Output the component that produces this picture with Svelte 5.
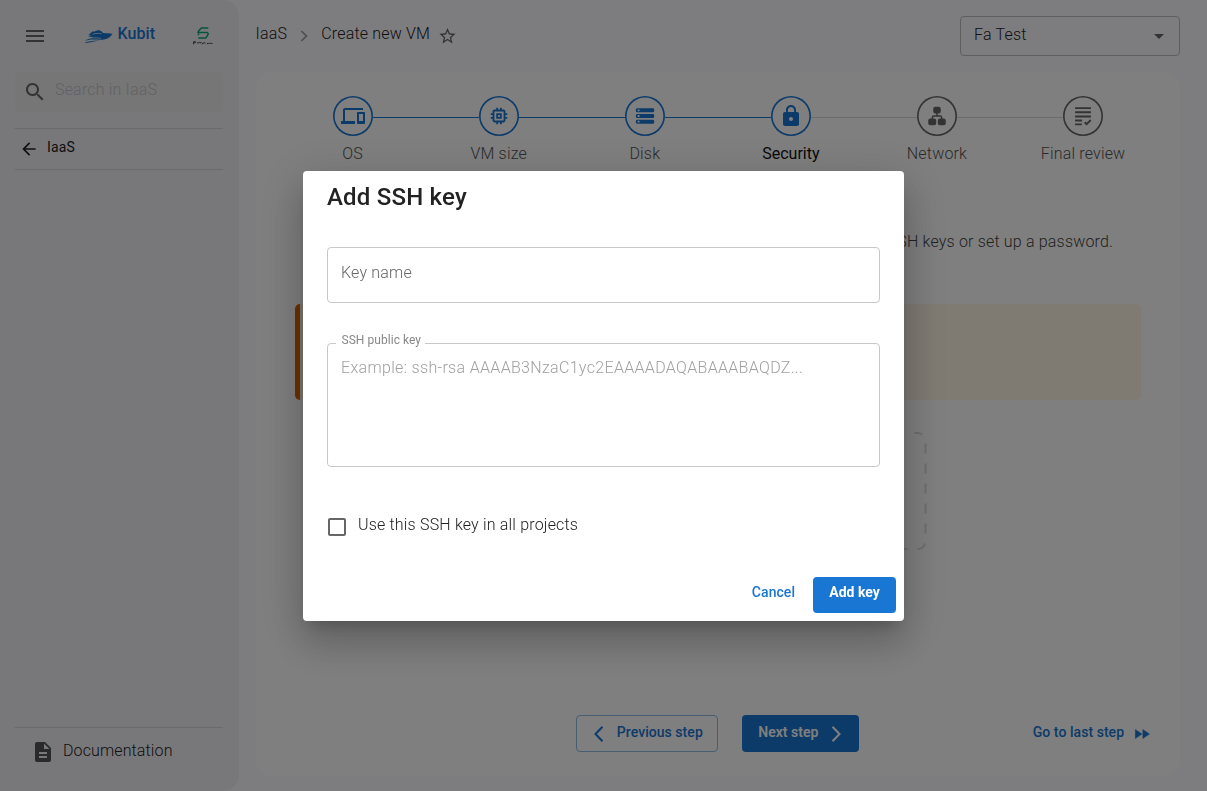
<script lang="ts">
  const steps = [
    { label: 'OS', icon: 'os', state: 'done' },
    { label: 'VM size', icon: 'cpu', state: 'done' },
    { label: 'Disk', icon: 'disk', state: 'done' },
    { label: 'Security', icon: 'lock', state: 'active' },
    { label: 'Network', icon: 'network', state: 'todo' },
    { label: 'Final review', icon: 'review', state: 'todo' }
  ];
</script>

<div class="page">
  <aside class="sidebar">
    <div class="brand-row">
      <svg class="burger" width="24" height="24" viewBox="0 0 24 24"><path d="M3 18h18v-2H3v2zm0-5h18v-2H3v2zm0-7v2h18V6H3z" /></svg>
      <div class="brand">
        <svg width="30" height="16" viewBox="0 0 30 16">
          <path d="M3.500 7.200C6 6.500 6.500 4.700 9 3.300l1.500.5C12.500 2.200 15 1.800 17 2.900l2.200 2.200c3 .5 6.300.2 9.300.7-1.600 2.900-4.300 5.200-8.500 5.700C14 12.300 9 10.700 4.500 12.100L.8 12.800c3-2.200 6-2.900 9.200-3.300-2.500-.6-4-.8-6-.6l3-1.900z" />
          <path d="M8.500 6.200c3-.9 6-1 9-.5M3 11c4-1.500 8.500-1.500 14-.6" class="cut" />
          <path d="M1 14.200c4-.3 8-2.100 15-1.700-5 .2-9 2.200-14.500 2.400z" />
        </svg>
        <span>Kubit</span>
      </div>
      <svg class="partner" width="22" height="20" viewBox="0 0 22 20">
        <path d="M16.300 1.900H9.300L6.800 4.700 5.900 6.600h9.500l1 1.300-2.500 4H6.300M6 9l1-1.200" fill="none" stroke="#0aa77c" stroke-width="1.500" stroke-linejoin="round" />
        <path d="M1.500 18.300v-2.500l1.700-.4.500 1-2 .8M5 17.200l1.200-.7.400.6 1.300-1.100.5 1 1.300-.5M10 18.300l1-1.500.7.500 1.300-.7.400.8M15 18.300l.7-1.200 1 .4 1.300-.4.800.4 1.800-.1" fill="none" stroke="#222" stroke-width=".75" />
      </svg>
    </div>
    <div class="search">
      <svg width="24" height="24" viewBox="0 0 24 24"><path d="M15.500 14h-.79l-.28-.27C15.410 12.590 16 11.110 16 9.500 16 5.910 13.090 3 9.500 3S3 5.910 3 9.500 5.910 16 9.500 16c1.610 0 3.090-.59 4.230-1.570l.27.28v.79l5 4.990L20.490 19l-4.990-5zm-6 0C7.010 14 5 11.990 5 9.500S7.010 5 9.500 5 14 7.010 14 9.500 11.990 14 9.500 14z" /></svg>
      <span>Search in IaaS</span>
    </div>
    <div class="back">
      <svg width="20" height="20" viewBox="0 0 24 24"><path d="M20 11H7.830l5.590-5.590L12 4l-8 8 8 8 1.410-1.410L7.830 13H20v-2z" /></svg>
      <span>IaaS</span>
    </div>
    <div class="docs">
      <svg width="24" height="24" viewBox="0 0 24 24"><path d="M14 2H6c-1.100 0-1.990.9-1.990 2L4 20c0 1.100.89 2 1.990 2H18c1.100 0 2-.9 2-2V8l-6-6zm2 16H8v-2h8v2zm0-4H8v-2h8v2zm-3-5V3.500L18.500 9H13z" /></svg>
      <span>Documentation</span>
    </div>
  </aside>

  <main>
    <header>
      <nav>
        <span>IaaS</span>
        <svg class="sep" width="20" height="20" viewBox="0 0 20 20"><path d="M7.300 5l5.200 5-5.200 5" fill="none" stroke="#9a9a9a" stroke-width="1.700" /></svg>
        <span>Create new VM</span>
        <svg class="star" width="17" height="17" viewBox="1.500 2 21 21"><path d="M22 9.240l-7.190-.62L12 2 9.190 8.630 2 9.240l5.460 4.730L5.820 21 12 17.270 18.180 21l-1.630-7.030L22 9.240zM12 15.400l-3.760 2.270 1-4.280-3.320-2.880 4.380-.38L12 6.100l1.710 4.040 4.380.38-3.320 2.880 1 4.280L12 15.400z" /></svg>
      </nav>
      <div class="select">
        <span>Fa Test</span>
        <svg width="24" height="24" viewBox="0 0 24 24"><path d="M7 10l5 5 5-5z" /></svg>
      </div>
    </header>

    <section class="card">
      <div class="stepper">
        {#each steps as s}
          <div class="step {s.state}">
            <div class="track">
              <i></i>
              <div class="circle">
                {#if s.icon === 'os'}
                  <svg width="24" height="24" viewBox="0 0 24 24"><path d="M4 6h18V4H4c-1.100 0-2 .9-2 2v11H0v3h14v-3H4V6zm19 2h-6c-.55 0-1 .45-1 1v10c0 .55.45 1 1 1h6c.55 0 1-.45 1-1V9c0-.55-.45-1-1-1zm-1 9h-4v-7h4v7z" /></svg>
                {:else if s.icon === 'cpu'}
                  <svg width="24" height="24" viewBox="0 0 24 24"><path d="M15 9H9v6h6V9zm-2 4h-2v-2h2v2zm8-2V9h-2V7c0-1.100-.9-2-2-2h-2V3h-2v2h-2V3H9v2H7c-1.100 0-2 .9-2 2v2H3v2h2v2H3v2h2v2c0 1.100.9 2 2 2h2v2h2v-2h2v2h2v-2h2c1.100 0 2-.9 2-2v-2h2v-2h-2v-2h2zm-4 6H7V7h10v10z" /></svg>
                {:else if s.icon === 'disk'}
                  <svg width="24" height="24" viewBox="0 0 24 24"><path fill-rule="evenodd" d="M3.500 3.500h17A1.500 1.500 0 0 1 22 5v1.500A1.500 1.500 0 0 1 20.500 8h-17A1.500 1.500 0 0 1 2 6.500V5A1.500 1.500 0 0 1 3.500 3.500zM4 4.800v2h2v-2zM3.500 9.800h17a1.500 1.500 0 0 1 1.500 1.500v1.400a1.500 1.500 0 0 1-1.500 1.500h-17A1.500 1.500 0 0 1 2 12.700v-1.400A1.500 1.500 0 0 1 3.500 9.800zM4 11v2h2v-2zM3.500 16h17a1.500 1.500 0 0 1 1.500 1.500V19a1.500 1.500 0 0 1-1.500 1.500h-17A1.500 1.500 0 0 1 2 19v-1.500A1.500 1.500 0 0 1 3.500 16zM4 17.200v2h2v-2z" /></svg>
                {:else if s.icon === 'lock'}
                  <svg width="24" height="24" viewBox="0 0 24 24"><path d="M18 8h-1V6c0-2.760-2.240-5-5-5S7 3.240 7 6v2H6c-1.100 0-2 .9-2 2v10c0 1.100.9 2 2 2h12c1.100 0 2-.9 2-2V10c0-1.100-.9-2-2-2zm-6 9c-1.100 0-2-.9-2-2s.9-2 2-2 2 .9 2 2-.9 2-2 2zm3.100-9H8.900V6c0-1.710 1.390-3.100 3.100-3.100 1.710 0 3.100 1.390 3.100 3.100v2z" /></svg>
                {:else if s.icon === 'network'}
                  <svg width="24" height="24" viewBox="0 0 24 24"><rect x="7.500" y="1" width="9" height="8" rx="2.400" /><rect x="1.500" y="15" width="9.500" height="8" rx="2.400" /><rect x="13" y="15" width="9.500" height="8" rx="2.400" /><path d="M12 8v4M6.500 16v-2.500q0-1.500 1.500-1.500h8q1.500 0 1.500 1.500V16" fill="none" stroke="currentColor" stroke-width="1.800" /></svg>
                {:else}
                  <svg width="24" height="24" viewBox="0 0 24 24"><path d="M2.500 2.500h19M2.500 7.500h19M2.500 12.500h19M2.500 17.300h8.500M2.500 22h8M14 19.500l2.300 2.300 5-5" fill="none" stroke="currentColor" stroke-width="2.300" /></svg>
                {/if}
              </div>
              <i></i>
            </div>
            <div class="label">{s.label}</div>
          </div>
        {/each}
      </div>

      <p class="intro">You can select one of your SSH keys or set up a password.</p>
      <div class="alert"></div>
      <svg class="dropzone" width="420" height="120" viewBox="0 0 420 120">
        <path d="M406.500 2h3a8 8 0 0 1 8 8v100a8 8 0 0 1-8 8H10a8 8 0 0 1-8-8V10a8 8 0 0 1 8-8h300" />
      </svg>

      <div class="actions">
        <button class="prev">
          <svg width="24" height="24" viewBox="0 0 24 24"><path d="M15.500 4.800L8.500 12l7 7.200" /></svg>
          <span>Previous step</span>
        </button>
        <button class="next">
          <span>Next step</span>
          <svg width="24" height="24" viewBox="0 0 24 24"><path d="M8.500 4.800l7 7.200-7 7.200" /></svg>
        </button>
        <button class="last">
          <span>Go to last step</span>
          <svg width="20" height="20" viewBox="0 0 24 24"><path d="M4 17.500l8-5.500-8-5.500v11zm9-11v11l8-5.500-8-5.500z" stroke="currentColor" stroke-width=".5" /></svg>
        </button>
      </div>
    </section>
  </main>
</div>

<div class="backdrop">
  <div class="dialog" role="dialog">
    <h2>Add SSH key</h2>
    <div class="field name"><span>Key name</span></div>
    <fieldset class="field key">
      <legend>SSH public key</legend>
      <span>Example: ssh-rsa AAAAB3NzaC1yc2EAAAADAQABAAABAQDZ...</span>
    </fieldset>
    <div class="check">
      <svg width="24" height="24" viewBox="0 0 24 24"><path d="M19 5v14H5V5h14m0-2H5c-1.100 0-2 .9-2 2v14c0 1.100.9 2 2 2h14c1.100 0 2-.9 2-2V5c0-1.100-.9-2-2-2z" /></svg>
      <span>Use this SSH key in all projects</span>
    </div>
    <div class="buttons">
      <button class="cancel"><span>Cancel</span></button>
      <button class="add"><span>Add key</span></button>
    </div>
  </div>
</div>

<style>
  :global(body) { margin: 0; overflow: hidden; background: #fbfbff; }
  * { box-sizing: border-box; }
  svg { display: block; flex: none; fill: currentColor; }
  .page, .backdrop { font: 300 16px/24px Roboto, sans-serif; letter-spacing: 0.18px; color: #222; }
  .page { display: flex; width: 1206.6px; height: 791px; background: #fbfbfe; }
  button { font: 500 14px/24px Roboto, sans-serif; letter-spacing: 0.05px; display: flex; align-items: center; border: 0; background: none; color: #1976d2; padding: 0; }
  button span { padding-bottom: 4px; white-space: nowrap; }

  .sidebar { width: 239.4px; flex: none; background: #f1f1f4; border-radius: 0 16px 16px 0; padding: 0 16px 0 15px; display: flex; flex-direction: column; }
  .brand-row { height: 72px; display: flex; align-items: center; padding-left: 8px; }
  .burger { color: #666; }
  .brand { display: flex; align-items: center; gap: 4px; margin-left: 36.5px; color: #1976d2; font-weight: 500; }
  .brand span { padding-bottom: 5px; letter-spacing: 0.1px; }
  .cut { fill: none; stroke: #f1f1f4; stroke-width: 0.7; }
  .partner { margin-left: 36.5px; }
  .search { height: 40px; background: #ececed; border-radius: 5px; display: flex; align-items: center; padding-left: 8px; gap: 8px; color: #666; }
  .search span { color: #c4c4c6; padding-bottom: 5px; }
  .back { height: 42px; margin-top: 16px; border: 1px solid #d4d4d7; border-width: 1px 0; display: flex; align-items: center; gap: 8px; padding-left: 4px; font-weight: 400; font-size: 14px; }
  .back span { padding-bottom: 4px; }
  .docs { margin-top: auto; height: 64px; border-top: 1px solid #d4d4d7; padding: 13px 0 0 16px; display: flex; gap: 8px; }
  .docs svg { color: #555; margin-top: -1px; }
  .docs span { margin-top: -2px; letter-spacing: 0.12px; }

  main { flex: 1; padding: 0 26.5px 15px 16.2px; display: flex; flex-direction: column; }
  header { height: 72px; display: flex; justify-content: space-between; align-items: center; }
  nav { display: flex; align-items: center; }
  nav span { padding-bottom: 4px; }
  .sep { margin: 0 7px; }
  .star { margin-left: 9px; color: #666; }
  .select { width: 220px; height: 40px; border: 1px solid #bdbdc0; border-radius: 4px; display: flex; align-items: center; justify-content: space-between; padding: 0 8px 0 13px; }
  .select span { padding-bottom: 3px; }
  .select svg { color: #666; }

  .card { flex: 1; background: #fff; border-radius: 16px; padding: 24px; display: flex; flex-direction: column; }
  .stepper { display: grid; grid-template-columns: repeat(6, 1fr); }
  .step { text-align: center; color: #555; }
  .track { display: flex; align-items: center; }
  .track i { flex: 1; height: 1.500px; margin-top: 2.500px; background: #1976d2; }
  .step:first-child i:first-child, .step:last-child i:last-child { background: none; }
  .todo i, .active i:last-child { background: #d8d8d8; }
  .circle { width: 40px; height: 40px; box-shadow: inset 0 0 0 1.600px currentColor; border-radius: 50%; display: flex; align-items: center; justify-content: center; color: #1976d2; }
  .step:nth-child(2) svg, .step:nth-child(3) svg { width: 22px; height: 22px; }
  .step:nth-child(5) svg, .step:nth-child(6) svg { width: 20px; height: 20px; }
  .todo .circle { color: #666; }
  .label { margin-top: 6px; }
  .active .label { color: #111; font-weight: 400; letter-spacing: 0; }
  .intro { margin: 64px 43px 0 0; text-align: right; color: #444; }
  .alert { margin: 50px 15px 0; height: 96px; flex: none; background: #fff4e5; border-left: 5px solid #d96000; border-radius: 5px; }
  .dropzone { margin: 31px 0 0 228px; }
  .dropzone path { fill: none; stroke: #dcdcdc; stroke-width: 2; stroke-dasharray: 10 10; stroke-dashoffset: 2; }
  .actions { margin-top: auto; display: grid; grid-template-columns: 1fr auto auto 1fr; column-gap: 24px; align-items: center; }
  .actions .prev { grid-column: 2; width: 142px; height: 37px; border: 1px solid #8cbae8; border-radius: 4px; padding-left: 9.500px; gap: 6px; }
  .actions .next { width: 117px; height: 37px; background: #1976d2; color: #fff; border-radius: 4px; padding-left: 16px; gap: 6px; font-weight: 600; letter-spacing: 0; }
  .prev path, .next path { fill: none; stroke: currentColor; stroke-width: 2; }
  .actions .last { justify-self: end; gap: 8px; padding-right: 4px; }

  .backdrop { position: fixed; inset: 0; background: rgba(0, 0, 0, 0.5); display: flex; align-items: center; justify-content: center; }
  .dialog { width: 601px; height: 450px; background: #fff; border-radius: 4px; padding: 0 24px; box-shadow: 0 11px 15px -7px rgba(0,0,0,.2), 0 24px 38px 3px rgba(0,0,0,.14), 0 9px 46px 8px rgba(0,0,0,.12); display: flex; flex-direction: column; }
  h2 { font-size: 24px; line-height: 32px; font-weight: 500; letter-spacing: 0.2px; margin: 10px 0 34.5px; }
  .field { border: 1px solid #c8c8c8; border-radius: 4px; padding: 0 13px; margin: 0; color: #666; white-space: nowrap; }
  .name { height: 56px; line-height: 49px; flex: none; }
  .key { height: 131px; flex: none; margin-top: 33px; color: #a0a0a0; padding-left: 8px; letter-spacing: 0.32px; }
  legend { font-size: 12px; line-height: 14px; padding: 0 4px 0 5.500px; letter-spacing: 0.05px; font-weight: 400; color: #888; position: relative; top: -3px; }
  .key span { display: block; padding: 5.500px 0 0 5px; }
  .check { display: flex; align-items: center; gap: 9.500px; margin: 45.500px 0 0 -2.500px; color: #666; }
  .check span { color: #222; padding-bottom: 5px; }
  .buttons { display: flex; justify-content: flex-end; gap: 18px; margin: auto -16px 8px 0; }
  .buttons span { padding-bottom: 5px; }
  .add { width: 83px; height: 36px; justify-content: center; background: #1976d2; color: #fff; border-radius: 4px; font-weight: 700; letter-spacing: 0; }
</style>
